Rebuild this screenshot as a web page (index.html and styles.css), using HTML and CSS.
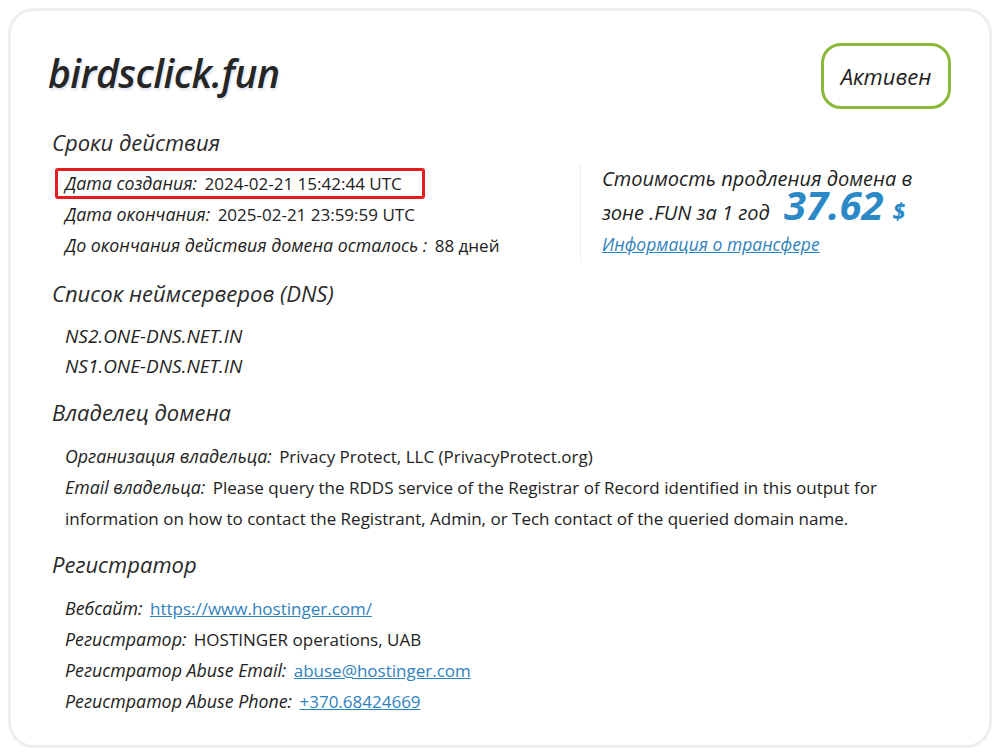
FILE: index.html
```html
<!DOCTYPE html>
<html lang="ru">
<head>
<meta charset="utf-8">
<title>birdsclick.fun</title>
<link rel="stylesheet" href="styles.css">
</head>
<body>
<div class="card">
  <header class="head">
    <h1 class="domain">birdsclick.fun</h1>
    <div class="badge">Активен</div>
  </header>

  <section class="sec first">
    <h2 class="sec-title">Сроки действия</h2>
    <div class="split">
      <div class="left">
        <div class="row hl"><span class="lbl">Дата создания:</span> <span class="val">2024-02-21 15:42:44 UTC</span></div>
        <div class="row"><span class="lbl">Дата окончания:</span> <span class="val">2025-02-21 23:59:59 UTC</span></div>
        <div class="row"><span class="lbl">До окончания действия домена осталось :</span> <span class="val">88 дней</span></div>
      </div>
      <div class="price">
        <div class="price-text">Стоимость продления домена в зоне .FUN за 1 год <span class="amount">37.62</span><span class="cur">$</span></div>
        <a class="transfer" href="#">Информация о трансфере</a>
      </div>
    </div>
  </section>

  <section class="sec">
    <h2 class="sec-title">Список неймсерверов (DNS)</h2>
    <div class="ns">
      <div class="ns-item">NS2.ONE-DNS.NET.IN</div>
      <div class="ns-item">NS1.ONE-DNS.NET.IN</div>
    </div>
  </section>

  <section class="sec">
    <h2 class="sec-title">Владелец домена</h2>
    <div class="rows">
      <div class="row"><span class="lbl">Организация владельца:</span> <span class="val">Privacy Protect, LLC (PrivacyProtect.org)</span></div>
      <div class="row"><span class="lbl">Email владельца:</span> <span class="val">Please query the RDDS service of the Registrar of Record identified in this output for information on how to contact the Registrant, Admin, or Tech contact of the queried domain name.</span></div>
    </div>
  </section>

  <section class="sec last">
    <h2 class="sec-title">Регистратор</h2>
    <div class="rows">
      <div class="row"><span class="lbl">Вебсайт:</span> <a class="val link" href="#">https://www.hostinger.com/</a></div>
      <div class="row"><span class="lbl">Регистратор:</span> <span class="val">HOSTINGER operations, UAB</span></div>
      <div class="row"><span class="lbl">Регистратор Abuse Email:</span> <a class="val link" href="#">abuse@hostinger.com</a></div>
      <div class="row"><span class="lbl">Регистратор Abuse Phone:</span> <a class="val link" href="#">+370.68424669</a></div>
    </div>
  </section>
</div>
</body>
</html>
```

FILE: styles.css
```css
* { box-sizing: border-box; }
html, body { margin: 0; padding: 0; background: #ffffff; }
body {
  font-family: "Open Sans", "Noto Sans", sans-serif;
  color: #222222;
  padding: 8px;
}
.card {
  height: 740px;
  border: 3px solid #eeeeee;
  border-radius: 26px;
  background: #ffffff;
  padding: 32px 38px 0 37px;
}
.head {
  display: flex;
  justify-content: space-between;
  align-items: flex-start;
}
.domain {
  margin: 7px 0 0 0;
  font-size: 39px;
  line-height: 46px;
  font-style: italic;
  font-weight: 600;
  color: #262626;
  letter-spacing: -0.5px;
  text-shadow: 1px 2px 3px rgba(40, 90, 140, 0.18);
}
.badge {
  width: 130px;
  height: 66px;
  border: 3px solid #8cb83a;
  border-radius: 20px;
  display: flex;
  align-items: center;
  justify-content: center;
  font-style: italic;
  font-size: 22px;
  color: #222222;
}
.sec { margin-top: 16px; }
.sec.first { margin-top: 18px; }
.sec.last { margin-top: 15px; }
.sec-title {
  margin: 0 0 11px 4px;
  font-size: 22px;
  line-height: 30px;
  font-weight: 400;
  font-style: italic;
  color: #2a2a2a;
}
.split { display: flex; align-items: flex-start; }
.left { width: 532px; padding-left: 7px; }
.rows { padding-left: 7px; padding-right: 30px; margin-top: 14px; }
.row {
  padding: 0 0 0 10px;
  font-size: 17px;
  line-height: 31px;
}
.left .row { margin-left: -7px; }
.left .row.hl {
  display: inline-block;
  margin-left: 0;
  border: 3px solid #e41e1e;
  border-radius: 3px;
  padding: 0 20px 0 7px;
  line-height: 25px;
}
.left .row:not(.hl) { padding-left: 17px; }
.lbl { font-style: italic; font-size: 17.8px; margin-right: 3px; }
.val { color: #222222; }
.link { color: #2f82bd; text-decoration: underline; }
.price {
  margin-top: -5px;
  border-left: 1px solid #eeeeee;
  padding-left: 21px;
  height: 99px;
  width: 340px;
}
.price-text {
  font-style: italic;
  font-size: 20px;
  line-height: 32px;
  color: #222222;
}
.amount {
  font-size: 40px;
  font-weight: 700;
  color: #2a89c6;
  line-height: 20px;
  margin-left: 9px;
}
.cur {
  font-size: 23px;
  font-weight: 700;
  color: #2a89c6;
  line-height: 20px;
  margin-left: 9px;
}
.transfer {
  display: block;
  margin-top: 2px;
  font-style: italic;
  font-size: 17.5px;
  line-height: 26px;
  color: #2f82bd;
  text-decoration: underline;
}
.ns { padding-left: 17px; margin-top: 13px; }
.ns-item {
  font-style: italic;
  font-size: 19px;
  line-height: 30px;
}
```
